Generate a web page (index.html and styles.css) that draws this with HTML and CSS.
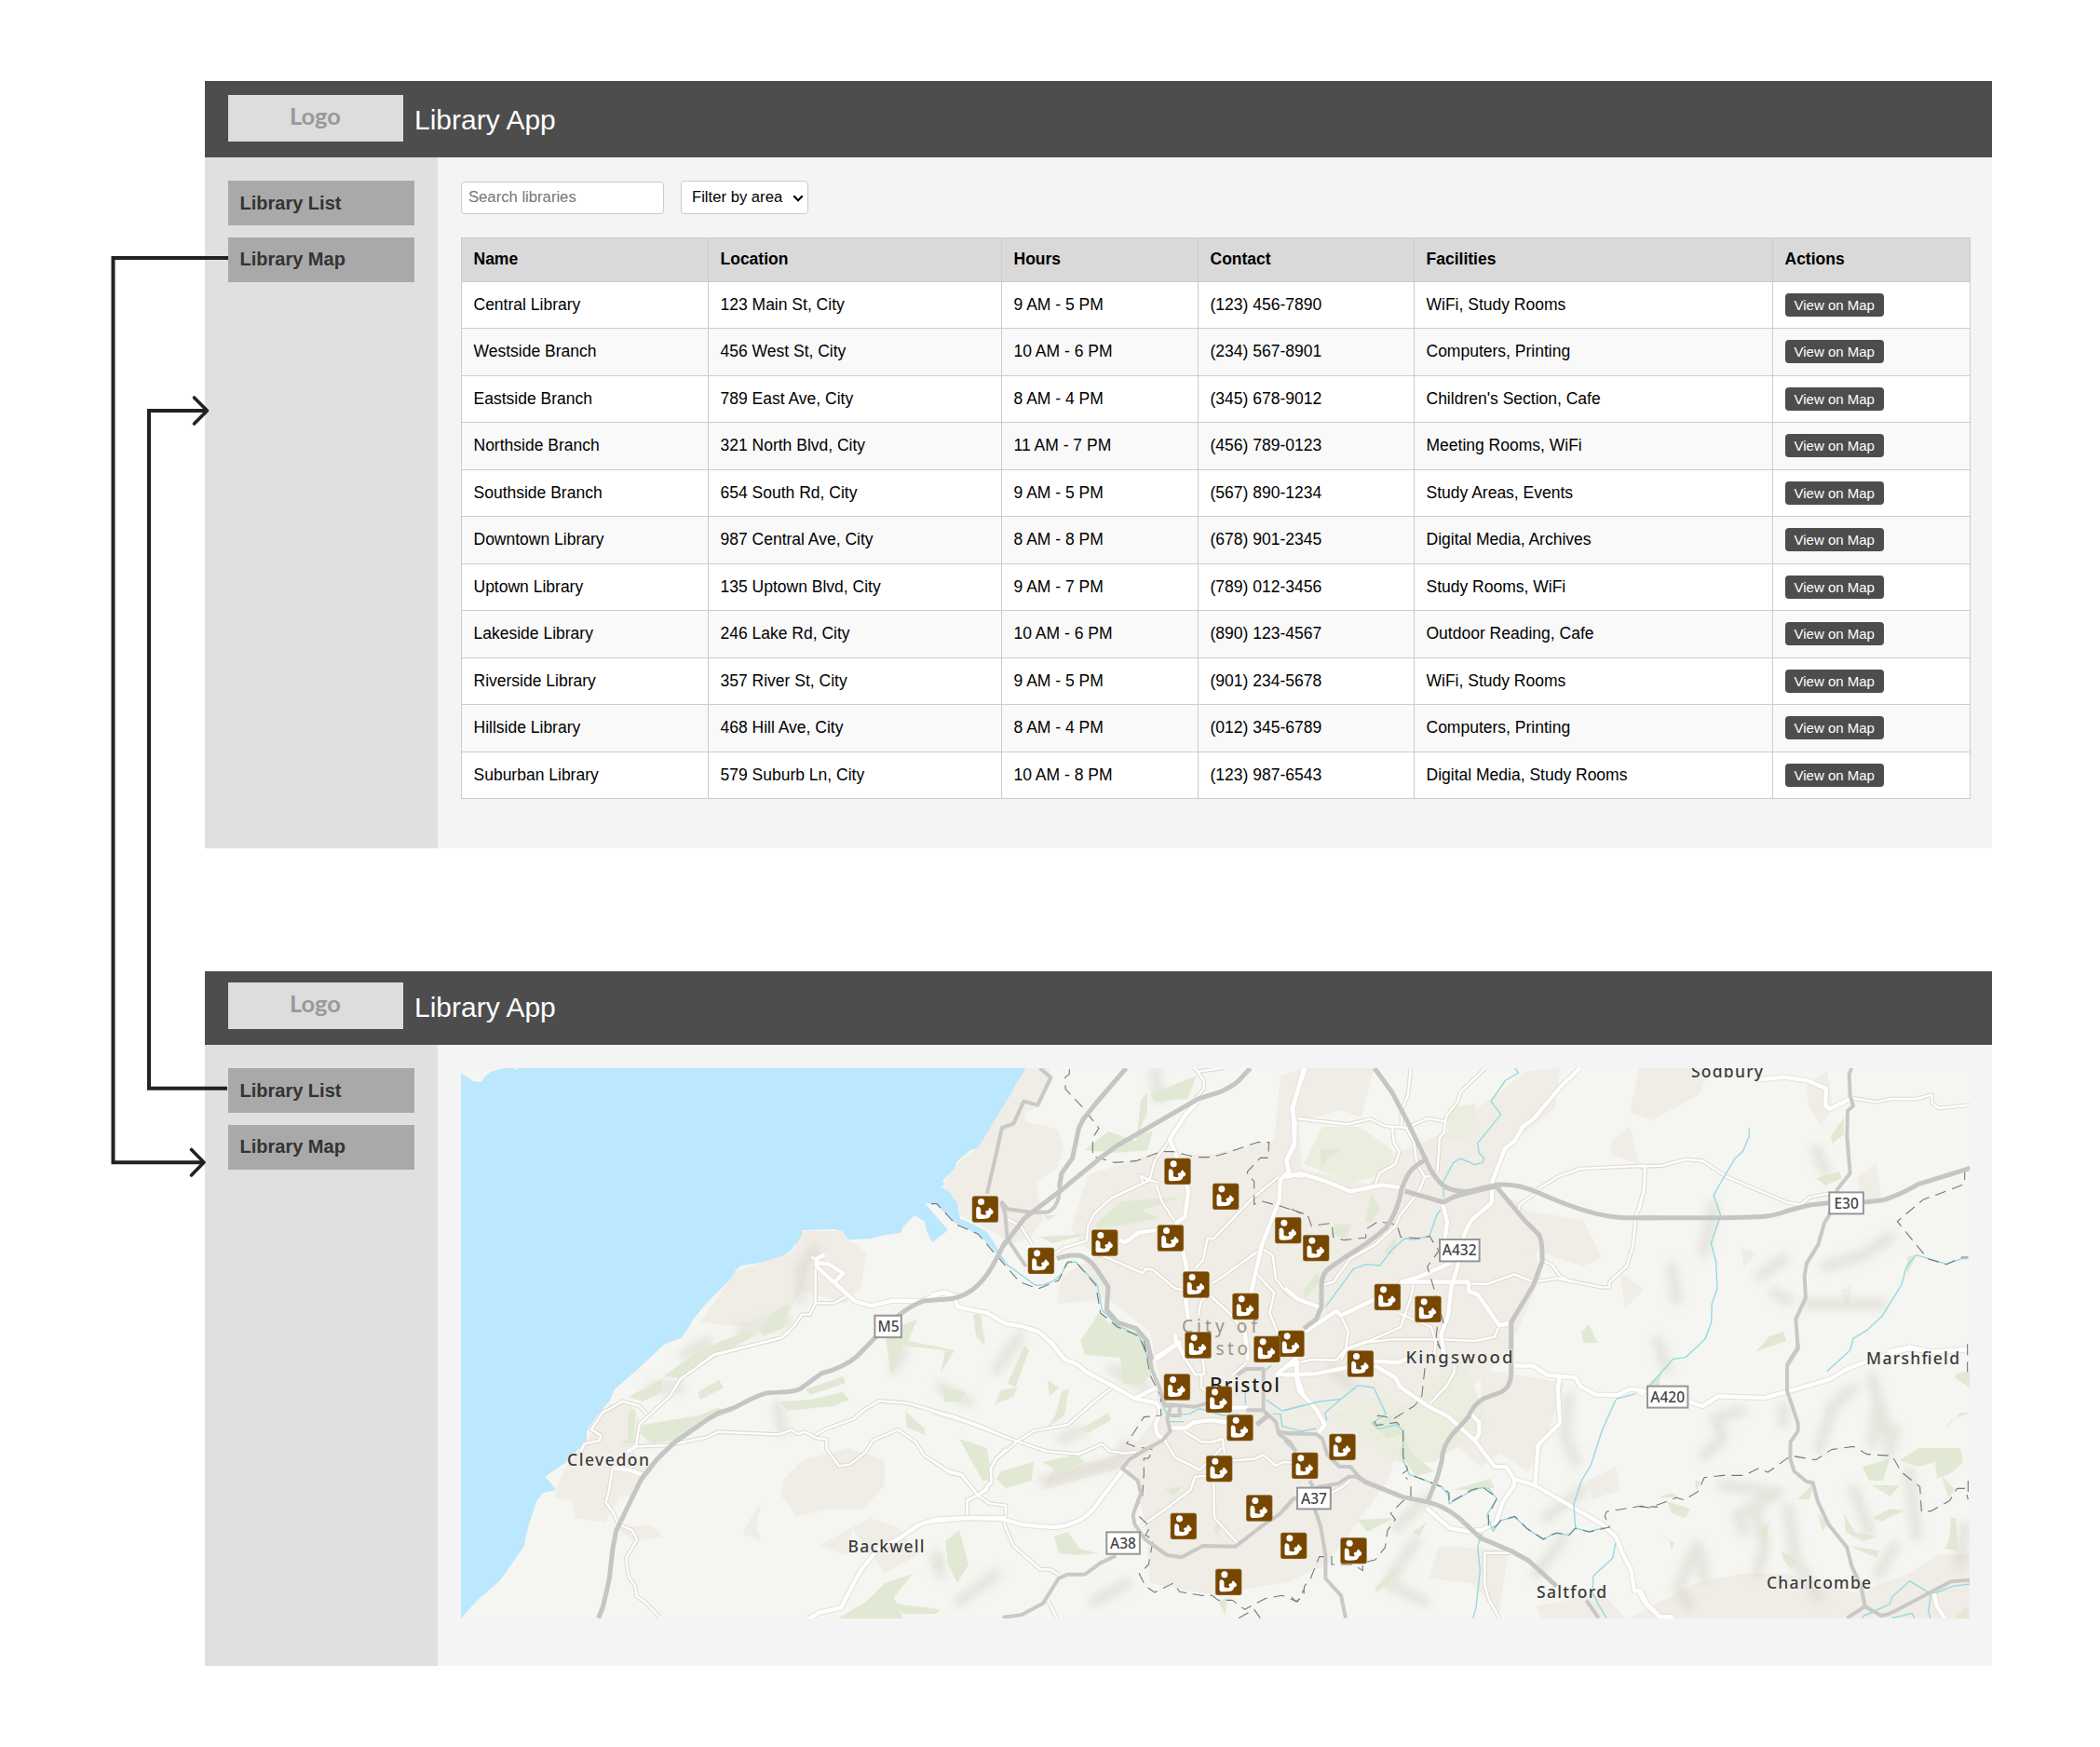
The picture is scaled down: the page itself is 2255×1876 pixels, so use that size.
FILE: index.html
```html
<!DOCTYPE html>
<html lang="en">
<head>
<meta charset="utf-8">
<title>Library App</title>
<link rel="stylesheet" href="styles.css">
</head>
<body>
<div class="board">
  <section class="app app-list">
    <header class="topbar">
      <div class="logo">Logo</div>
      <h1 class="title">Library App</h1>
    </header>
    <div class="body">
      <nav class="sidebar">
        <a class="nav-item">Library List</a>
        <a class="nav-item">Library Map</a>
      </nav>
      <main class="content">
        <div class="filters">
          <input class="search" type="text" placeholder="Search libraries">
          <div class="select">Filter by area
            <svg class="chevron" viewBox="0 0 12 8"><path d="M1.3 1.3 6 6.2 10.7 1.3"/></svg>
          </div>
        </div>
        <table class="libraries">
          <colgroup><col class="c-name"><col class="c-loc"><col class="c-hours"><col class="c-contact"><col class="c-fac"><col class="c-act"></colgroup>
          <thead><tr><th>Name</th><th>Location</th><th>Hours</th><th>Contact</th><th>Facilities</th><th>Actions</th></tr></thead>
          <tbody>
            <tr><td>Central Library</td><td>123 Main St, City</td><td>9 AM - 5 PM</td><td>(123) 456-7890</td><td>WiFi, Study Rooms</td><td><button class="view">View on Map</button></td></tr>
            <tr><td>Westside Branch</td><td>456 West St, City</td><td>10 AM - 6 PM</td><td>(234) 567-8901</td><td>Computers, Printing</td><td><button class="view">View on Map</button></td></tr>
            <tr><td>Eastside Branch</td><td>789 East Ave, City</td><td>8 AM - 4 PM</td><td>(345) 678-9012</td><td>Children's Section, Cafe</td><td><button class="view">View on Map</button></td></tr>
            <tr><td>Northside Branch</td><td>321 North Blvd, City</td><td>11 AM - 7 PM</td><td>(456) 789-0123</td><td>Meeting Rooms, WiFi</td><td><button class="view">View on Map</button></td></tr>
            <tr><td>Southside Branch</td><td>654 South Rd, City</td><td>9 AM - 5 PM</td><td>(567) 890-1234</td><td>Study Areas, Events</td><td><button class="view">View on Map</button></td></tr>
            <tr><td>Downtown Library</td><td>987 Central Ave, City</td><td>8 AM - 8 PM</td><td>(678) 901-2345</td><td>Digital Media, Archives</td><td><button class="view">View on Map</button></td></tr>
            <tr><td>Uptown Library</td><td>135 Uptown Blvd, City</td><td>9 AM - 7 PM</td><td>(789) 012-3456</td><td>Study Rooms, WiFi</td><td><button class="view">View on Map</button></td></tr>
            <tr><td>Lakeside Library</td><td>246 Lake Rd, City</td><td>10 AM - 6 PM</td><td>(890) 123-4567</td><td>Outdoor Reading, Cafe</td><td><button class="view">View on Map</button></td></tr>
            <tr><td>Riverside Library</td><td>357 River St, City</td><td>9 AM - 5 PM</td><td>(901) 234-5678</td><td>WiFi, Study Rooms</td><td><button class="view">View on Map</button></td></tr>
            <tr><td>Hillside Library</td><td>468 Hill Ave, City</td><td>8 AM - 4 PM</td><td>(012) 345-6789</td><td>Computers, Printing</td><td><button class="view">View on Map</button></td></tr>
            <tr><td>Suburban Library</td><td>579 Suburb Ln, City</td><td>10 AM - 8 PM</td><td>(123) 987-6543</td><td>Digital Media, Study Rooms</td><td><button class="view">View on Map</button></td></tr>
          </tbody>
        </table>
      </main>
    </div>
  </section>

  <section class="app app-map">
    <header class="topbar">
      <div class="logo">Logo</div>
      <h1 class="title">Library App</h1>
    </header>
    <div class="body">
      <nav class="sidebar">
        <a class="nav-item">Library List</a>
        <a class="nav-item">Library Map</a>
      </nav>
      <main class="content">
        <svg class="map" viewBox="495 1147 1620 591">
          <defs>
            <filter id="soft" x="-30%" y="-30%" width="160%" height="160%"><feGaussianBlur stdDeviation="5"/></filter>
            <symbol id="pin" viewBox="0 0 86 86">
              <rect x="1" y="1" width="84" height="84" rx="8" fill="#774700" stroke="#a98a5c" stroke-width="2"/>
              <circle cx="30" cy="19" r="10.5" fill="#fff"/>
              <path class="reader" d="M14 41Q15 34 21 35Q28 36 29 44L29 59L40 62Q46 62 47 57Q41 54 45 49Q49 46 53 48Q53 42 57 39Q61 37 63 44Q70 47 69 54Q67 60 61 60Q60 68 52 72Q40 75 20 74Q14 74 14 68Z" fill="#fff"/>
            </symbol>

            <!-- secondary roads, drawn twice: casing then fill -->
            <g id="minor">
              <g transform="translate(480 1130) scale(.38265 .33333)">
                <path d="M1034 690V808L1018 845H995L975 880L938 920L750 973L695 1020M1034 808H1085L1120 788"/>
                <path d="M1060 652L1025 662L1040 680"/>
              </g>
              <g transform="translate(480 1430) scale(.38265 .33333)">
                <path d="M960 0L938 20L750 75L655 152L625 208L540 298L530 370L505 388"/>
                <path d="M375 388L385 362L428 350L432 335L405 315L438 258L455 250L492 224L540 240L560 265"/>
                <path d="M530 370L620 366L730 340L760 323L930 331L968 317L985 330L1005 323L1035 342L1065 347L1065 378L1100 433L1132 427L1175 388L1195 350L1265 316L1315 355L1340 400L1405 447L1445 460L1490 527"/>
                <path d="M1035 332L1070 310L1140 282L1170 252L1213 223L1290 230L1330 243L1420 272L1500 305L1568 340"/>
                <path d="M465 440L453 520L445 550L465 580L480 620L520 640L533 670L502 730L510 790L528 820L532 853L555 870L600 923"/>
                <path d="M1568 378L1540 410L1527 437V488L1490 527L1460 545V597"/>
              </g>
              <g transform="translate(1000 1130) scale(.33333)">
                <path d="M770 280L720 350L703 412L580 470L525 520L505 560L500 608L425 630L395 650M730 418L703 412L675 398L683 425"/>
                <path d="M725 430L745 485L785 545"/>
                <path d="M855 60L878 90V118L850 150M845 50L860 62L945 50"/>
                <path d="M1120 400L1035 470L910 600H890L875 670L850 697"/>
                <path d="M540 650L683 712L690 697L713 700L785 760L820 768M905 745L945 718L1065 632L1100 655L1110 730L1150 780L1200 806"/>
                <path d="M900 785L960 840L1010 900M860 850L868 805L890 780"/>
                <path d="M1050 715L1105 775L1090 840L1120 915"/>
                <path d="M245 537L290 562L325 620"/>
              </g>
              <g transform="translate(1380 1130) scale(.33333)">
                <path d="M35 213L200 232L275 215L320 237L390 243L460 213L518 223M405 51L395 140L375 185V237M345 240L350 290L368 320L355 360L305 388L290 425"/>
                <path d="M645 51L565 128L555 160L520 205L512 258L498 275L490 385M390 243L415 290L425 360L450 402L430 450L370 525L355 560L290 620L210 665L155 740L120 750"/>
                <path d="M750 515L757 488L800 460L815 440L880 400L950 375L1160 365M1160 365L1157 440L1130 530L1120 625L1100 690L1045 740V757L1020 757L870 727"/>
                <path d="M830 670L860 685L885 720L920 740M375 740L650 747L738 715L800 740L880 728"/>
                <path d="M415 740L405 790L372 885L260 935L195 960L180 990M260 935L340 925H505L610 930L675 917L688 883"/>
                <path d="M365 840L470 885L485 930L480 990M180 850L203 900L195 960"/>
                <path d="M465 400H445"/>
              </g>
              <g transform="translate(1760 1130) scale(.33333)">
                <path d="M0 368L75 365L150 345L205 350L280 400L475 483L520 492L550 467L610 455"/>
                <path d="M18 365L15 450L0 510M690 148L765 160L810 150H895L943 137L945 165L965 180L1068 170"/>
              </g>
              <g transform="translate(1000 1440) scale(.33333)">
                <path d="M0 225L110 260L275 322L370 355L475 365L550 332L575 355L625 362L660 357"/>
                <path d="M585 148L525 195L440 270L330 290L275 325L210 380L190 412L195 455L180 465V480L150 497L115 512V567"/>
                <path d="M0 383L60 425L97 433L150 497L185 523L240 530V575L235 590L265 660L350 735L385 737L415 755M375 835L405 893"/>
                <path d="M910 455L912 570L990 655M885 435L850 437L835 480L770 530L675 598"/>
                <path d="M970 385L1040 380L1070 367L1110 402L1135 390L1165 392M755 325L785 375L865 415L935 345M815 290L870 325H905L938 315L945 360"/>
                <path d="M820 60L850 108H880L875 55M870 108V150L890 165M970 110L1015 70"/>
              </g>
              <g transform="translate(1380 1440) scale(.33333)">
                <path d="M45 70L85 60L165 62L195 25L265 0M545 80V100L520 145L460 208M725 683H643V785L655 830L690 893"/>
                <path d="M210 450L185 470L150 490"/>
              </g>
            </g>

            <!-- primary roads -->
            <g id="major">
              <g transform="translate(480 1130) scale(.38265 .33333)">
                <path d="M1060 652L1037 665V690L1085 740L1145 802L1190 817L1250 800L1330 802L1395 772L1435 790"/>
                <path d="M1037 678L1070 682L1112 712L1085 743"/>
              </g>
              <g transform="translate(480 1430) scale(.38265 .33333)">
                <path d="M1015 925L1045 905L1105 890L1160 770L1210 700L1270 665L1325 622L1370 605L1460 600H1568M505 388L530 370M465 440L510 445L545 460"/>
              </g>
              <g transform="translate(1000 1130) scale(.33333)">
                <path d="M0 782L40 775L75 790L85 820L180 840L240 875L290 882L345 900L380 930L430 990"/>
                <path d="M1200 51L1165 180L1170 290L1145 345L1152 385L1125 410L1120 480L1065 620L1030 775M860 158L820 200L768 280L815 395L828 450L817 530L790 548L812 650L822 690L820 800L828 860"/>
                <path d="M605 605L625 612L670 580L725 573M1130 400L1160 395L1200 398M785 910L790 940L720 985M1010 900L1020 990"/>
              </g>
              <g transform="translate(1380 1130) scale(.33333)">
                <path d="M65 51L22 180L32 230L30 300L5 350L12 390L0 405M0 403L50 390L130 415L210 448L310 428L370 435"/>
                <path d="M950 51L890 108L800 215L765 240L740 285L708 310L668 415L665 485L600 540L578 585L555 690L535 760L525 850L502 910L515 990"/>
                <path d="M508 490L522 545L515 600M530 680L440 720L375 740H590L592 770L620 780L690 880L725 872M290 795L180 848L165 833L125 860L65 900"/>
                <path d="M0 760L40 795L120 825"/>
              </g>
              <g transform="translate(1760 1130) scale(.33333)">
                <path d="M380 88L470 80L545 92L603 117L600 170L613 183L680 150M800 965L870 950L950 965L1060 955"/>
              </g>
              <g transform="translate(1000 1440) scale(.33333)">
                <path d="M385 0L430 60L470 75L500 100L585 145L655 185L725 200L740 225L722 270L728 300L755 325M655 185L722 152"/>
                <path d="M0 580L120 570L225 573L300 593L390 600Q440 600 490 570Q520 550 545 510L615 420"/>
                <path d="M770 280H820L845 262L900 255L955 262M785 0L800 5L722 60M790 0L820 60M945 215H1020M1110 110L1170 60L1200 25M1110 108H1200M1175 60L1180 120L1200 180"/>
              </g>
              <g transform="translate(1380 1440) scale(.33333)">
                <path d="M0 110L100 105L200 85L290 65L365 70L395 55M290 80L355 118L370 148L460 210L525 243L610 320L675 405H712L738 445L805 465L1020 590L1065 630L1085 680L1115 740L1125 805H1145L1165 845L1200 880"/>
                <path d="M0 85L40 70L35 110L45 160L100 220L128 270L108 295M738 80H800L845 110L935 118L950 145L1000 173L1070 175L1110 155L1165 160"/>
                <path d="M885 118L878 150L885 265L815 335L805 465M600 237L625 262V300L610 320M738 445V465L700 520L680 585L635 608L590 613L530 603L455 538"/>
              </g>
              <g transform="translate(1760 1440) scale(.33333)">
                <path d="M0 165L15 170M160 195L205 210L255 178L405 183L480 163L615 123L670 90L750 60L830 35L870 25L950 35L1062 28M0 810L20 845L65 888H110M950 810L960 855L985 893"/>
              </g>
            </g>
          </defs>

          <rect x="495" y="1147" width="1620" height="591" fill="#bbe7ff"/>
          <path class="land" d="M1102 1147L1095 1158 1089 1167 1087 1177 1073 1197 1062 1216 1050 1233 1042 1235 1027 1248 1025 1255 1012 1268 1016 1273 1010 1274 1020 1280 1028 1292 1031 1309 1046 1315 1060 1323 1072 1342 1080 1355 1076 1355 1068 1343 1053 1328 1043 1322 1025 1313 1015 1303 1005 1293 993 1292 1018 1321 1001 1334 995 1322 993 1312 982 1305 970 1317 967 1324 951 1326 935 1330 916 1331 907 1331 905 1322 895 1320 861 1321 863 1330 853 1337 849 1343 832 1354 815 1356 796 1359 789 1365 790 1368 775 1383 758 1400 744 1417 740 1425 731 1437 714 1443 685 1470 660 1492 654 1505 641 1520 630 1537 630 1547 622 1555 608 1570 585 1586 591 1592 597 1600 583 1603 576 1612 565 1647 563 1660 537 1697 511 1720 495 1738H2115V1147Z"/>
          <path class="land" d="M495 1147H540L527 1151 520 1157 517 1162 508 1161 495 1152Z"/>
          <path class="land" d="M552 1147h4l-2 2zM841 1191h2v1h-2z"/>

          <g class="urban">
            <path d="M1102 1147H1128L1125 1165 1113 1190 1100 1195 1102 1205 1135 1212 1142 1232 1135 1255 1112 1270 1120 1310 1105 1330 1085 1335 1070 1325 1031 1305 1028 1292 1013 1272 1028 1250 1050 1233Z"/>
            <path d="M1168 1262L1240 1238 1300 1240 1368 1225 1375 1155 1400 1147H1475L1462 1200 1440 1192 1395 1205 1398 1255 1470 1272 1495 1240 1555 1215 1600 1180 1640 1150 1675 1147 1670 1190 1615 1235 1605 1275 1640 1300 1655 1370 1620 1450 1570 1500 1510 1530 1490 1590 1465 1625 1425 1680 1380 1700 1300 1712 1235 1700 1230 1640 1220 1590 1210 1575 1120 1600 1130 1580 1210 1560 1240 1525 1245 1480 1235 1430 1190 1395 1135 1400 1140 1370 1175 1350 1150 1320Z"/>
            <path d="M863 1322L905 1322 910 1330 930 1345 925 1380 908 1400 860 1385 848 1410 800 1425 752 1420 790 1365 850 1345Z"/>
            <path d="M654 1508L675 1505 690 1530 680 1560 700 1580 680 1605 665 1608 650 1635 618 1630 615 1612 595 1608 605 1580 632 1545Z"/>
            <path d="M862 1568L910 1555 950 1568 950 1595 925 1622 892 1620 855 1628 838 1605 842 1588Z"/>
            <path d="M915 1640L935 1630 965 1640 985 1670 950 1690ZM660 1640L700 1638 712 1650 680 1655ZM800 1640L818 1612 812 1640 818 1655 798 1648Z"/>
            <path d="M1640 1300L1700 1310 1720 1350 1700 1360 1640 1340ZM1590 1470L1680 1485 1655 1560 1640 1580 1610 1560 1590 1575 1560 1550 1590 1530Z"/>
            <path d="M1545 1660L1620 1665 1610 1730 1580 1700 1535 1695ZM1650 1725L1720 1710 1745 1738H1655Z"/>
            <path d="M1940 1165L1962 1150 1968 1190 1955 1208 1943 1190ZM1994 1265L2015 1250 2020 1285 1998 1290ZM1870 1340L1886 1345 1872 1362ZM1976 1385L1988 1380 1984 1405Z"/>
            <path d="M1750 1738L1820 1700 1870 1690 1920 1690 1990 1710 2050 1690 2080 1670 2115 1668V1738ZM1760 1147H1835L1825 1175 1773 1203 1750 1195Z"/>
            <path d="M1730 1225L1750 1210 1760 1250 1730 1240ZM1740 1365L1765 1385 1745 1405ZM1705 1590L1735 1575 1740 1600 1710 1610ZM880 1660L915 1640 910 1670Z"/>
          </g>

          <g class="shade" filter="url(#soft)">
            <path d="M1870 1515l-28 8 8 20-20 20M1915 1510v18M1990 1490l-22 20-15 45M2015 1515l-4 35M2035 1535l-6 25M1850 1595l60 8-45 25 8 16M1885 1620l10 40-8 30M1920 1620l8 55 25 40M1990 1600l18 45M2050 1580l8 70M1822 1660l-20 45 12 20M1825 1665l5 30M2035 1660l-18 30M2110 1640l-6 40M2010 1480l20 70"/>
            <path d="M1950 1235l10 22M1890 1370l25-18M1960 1360l40-12 30-20M1940 1400l80 0M1905 1388l15 8M1840 1295l-10 50M1780 1440l10 30M1795 1360l5 35"/>
            <path d="M1685 1500l-5 40 12 30M1520 1655l-30 45 40 20M1700 1600l-40 30M1430 1470l20 18M1500 1640l30-30M1680 1650l-30 40"/>
            <path d="M1140 1545l20-8M1120 1590l80-20 10-20M1010 1690l-5-20M1070 1470l25-35M1175 1720l35-20M1240 1150l5 30M1010 1490l30 15M960 1470l10-20M1030 1720l40-30"/>
            <path d="M860 1395l0-30 15-25M795 1430l50-12M735 1455l25-15M700 1490l30 0M835 1510l5 25M1195 1470l35 20M700 1545l30-8"/>
          </g>

          <g class="woods">
            <path d="M815 1425L835 1405 848 1400 842 1425 820 1435ZM730 1465L755 1448 800 1430 812 1433 760 1462 730 1480 712 1478ZM749 1495L772 1482 777 1490 752 1503ZM690 1530L750 1520 770 1512 790 1515 760 1525 735 1545 700 1550 688 1540ZM675 1500L712 1480 710 1495 690 1505ZM838 1505L870 1503 905 1495 912 1503 895 1510 845 1515ZM865 1492L905 1478 908 1485 870 1498ZM675 1515l8-2-2 25 0 12-15 0 8-5z"/>
            <path d="M950 1430L985 1417 975 1440 1025 1450 1010 1475 1015 1450 970 1445 957 1477ZM1045 1412l8-2 5 35-10-10zM1012 1490l25 5-5 10h-18zM1030 1545L1060 1555 1065 1590 1055 1590ZM1075 1580L1110 1570 1108 1590 1080 1598 1070 1588ZM1120 1570L1155 1562 1165 1570 1135 1580ZM972 1515l20 18 2 8-20-8z"/>
            <path d="M1180 1410L1190 1420 1220 1430 1232 1450 1237 1475 1225 1488 1205 1485 1203 1458 1165 1455 1160 1440ZM1100 1445l5 5-15 40-8-5zM1075 1492l18-2-5 10-20 8zM1125 1482l12 8-10 10zM1140 1495l8-5-5 30-20 15 10-15zM1160 1535l30-18 3 8-25 14z"/>
            <path d="M1165 1235L1190 1215 1220 1225 1225 1182 1232 1172 1232 1195 1222 1218 1238 1215 1232 1235 1200 1238ZM1235 1175L1285 1155 1275 1180 1240 1183ZM1175 1315L1205 1290 1270 1285 1225 1300 1245 1308 1180 1320ZM1115 1328L1170 1325 1130 1335ZM1120 1305h15l-10 5z"/>
            <path class="park" d="M1400 1250L1420 1210 1460 1210 1495 1235 1490 1260 1450 1270ZM1555 1190L1585 1185 1580 1220 1555 1225ZM1430 1520L1480 1500 1510 1510 1570 1460 1600 1530 1540 1570 1500 1570Z"/>
            <path d="M1418 1234h24l-15 8-9 16zM1472 1282l10 15-8 15h-8zM1433 1315h18l-5 15-15-5zM1400 1385l15-18 4 8-18 20zM1485 1345l15-18-3 20zM1475 1530l20-10 10 20-15 5zM1508 1540L1515 1560 1540 1580 1520 1585 1503 1560ZM1560 1600l40-12 5 10-30 2zM1458 1632l40-2-30 15zM1517 1645l15-10-8 15zM1477 1705l25-25-10 20-15 10z"/>
            <path d="M1015 1655L1030 1643 1040 1680 1028 1700 1018 1680ZM1132 1650l15-5 12 18 20 5-22 2-20-2zM930 1720L950 1700 980 1690 960 1715 970 1738H900ZM960 1722l50 6-5 5h-35zM1000 1685l12-12-2 10zM1250 1600l22-5-12 12zM1303 1640l10-10-5 20zM1308 1720l10-5-2 20zM1060 1590l0 5"/>
            <path d="M1966 1220L1980 1200 1980 1218 1968 1228ZM1950 1265L1975 1258 1978 1265 1960 1273ZM1885 1452L1900 1435 1915 1430 1918 1440 1895 1448ZM1698 1430l8-8 10 20h-16zM2048 1350l10-3-10 22zM1770 1487l15-15-5 20z"/>
            <path d="M2040 1568L2060 1555 2105 1555 2108 1570 2095 1582 2080 1588 2078 1570 2060 1575ZM2085 1585l15 15-8 8zM2000 1575l18-5 12-5-8 25h-15zM2010 1595l30 0-10 12zM1790 1612L1815 1620 1810 1630 1795 1625ZM1780 1608l15-5 8 5zM1820 1590l6 0-4 12zM1888 1645L1900 1635 1895 1660ZM1913 1665l18 12-8 8-8-10zM1930 1610l18-18-5 18zM1980 1625L1992 1645 2015 1650 2000 1655 1982 1645ZM1985 1660l33 5-2 8zM2010 1630l20-10 15 2-25 12zM2095 1630l5 0 3 35-15-2 5-10zM1795 1665l-2-10-15-10 20 12zM2088 1535L2105 1517H2115L2095 1525ZM2100 1475L2115 1472V1490L2100 1480ZM2098 1738L2112 1725 2115 1738ZM1952 1625l10 10-5 10z"/>
          </g>

          <use href="#minor" class="minor-case"/>
          <use href="#minor" class="minor-fill"/>
          <use href="#major" class="major-case"/>
          <use href="#major" class="major-fill"/>

          <g class="river">
            <path transform="translate(1000 1130) scale(.33333)" d="M215 650L245 685L335 750Q380 755 420 715L435 680L465 675L535 750L550 830L600 880L670 915L700 990"/>
            <path transform="translate(1380 1130) scale(.33333)" d="M740 51L752 66L710 90L663 158L695 200L620 293L625 325L640 340L637 355L610 362L565 342L542 355L508 420L512 470M500 507L488 525L465 592L415 603L385 600L345 635L305 687L260 683L220 698L130 820"/>
            <path transform="translate(1760 1130) scale(.33333)" d="M355 245V270L335 318L307 345L240 460L263 525L232 615L248 675L252 760L235 810L233 870L213 923L150 983L110 988L22 1088M1062 665H1040L990 682L893 653L862 690L845 750L783 850L735 895L690 922L680 960L605 1028"/>
            <path transform="translate(1000 1440) scale(.33333)" d="M740 190L760 240L830 235L865 218L940 240L990 235M765 260H815M1012 165V205M1080 190L1130 225L1200 207M1100 235H1125L1130 275L1200 292M1095 80L1075 95"/>
            <path transform="translate(1380 1440) scale(.33333)" d="M0 223L110 195L180 187L235 143L285 150L325 235L280 265L300 283L360 270L380 290V385L400 430L505 470L528 500V525L600 483L635 472L655 475L683 508L650 560L670 613L695 578L740 567L780 605L832 640L865 620L915 625L935 603L980 615L1030 600M135 255L128 232L180 187M0 295L45 292L100 282M635 620L620 660L628 740L615 860L605 893M1065 190L1020 290L985 400L955 450L930 525L935 603M1065 650L1055 700L993 757L990 810L1010 850L1035 893M1065 187L1130 170"/>
            <path transform="translate(1760 1440) scale(.33333)" d="M1065 783L1010 790L960 810L935 812L872 773L815 825L808 848L725 885L720 893M940 815L932 870L938 893M815 893L880 877L887 893"/>
          </g>

          <g class="boundary">
            <path transform="translate(1000 1130) scale(.33333)" d="M0 488H18L80 555L150 585L215 660L285 740L345 762L410 735L440 675L465 675L530 750L545 840L600 885L670 915L700 985M445 55V70L432 80V118L490 180L540 245L520 275V335L590 355L660 350L740 320H780L850 338H900L950 325L1050 290H1088L1085 340H1060L1018 385L1022 400L1040 415V490L1065 480L1130 497L1200 520"/>
            <path transform="translate(1380 1130) scale(.33333)" d="M20 505L75 530L85 560L150 550L155 595L190 605L260 597V570L300 545L360 555L372 595L440 600L465 592L495 640L458 690L485 780L510 870L490 885L485 930L500 955"/>
            <path transform="translate(1760 1130) scale(.33333)" d="M1050 375L1048 425L915 475L832 545L930 665L990 683L1040 660H1060M1058 940V1030"/>
            <path transform="translate(1000 1440) scale(.33333)" d="M685 0L705 110L740 180V240L685 245L630 330L655 340L715 350L700 378H685V430L680 500L655 550L705 600L690 625L715 640L700 720L670 750L690 790L720 810L780 780L800 808L870 820H905L925 835H970L1010 865L1075 830L1130 820L1180 840L1200 800M990 893L1040 865L1060 893"/>
            <path transform="translate(1380 1440) scale(.33333)" d="M490 0L500 25M450 88L440 180L415 210L350 250L300 240L285 255L295 272L360 262L380 285V370L395 415L375 430L395 445M415 435L505 470L528 490V522L600 480L635 470L683 505L655 560V600H675L695 578L740 565L780 605L832 638L875 618L915 625L935 603L980 615L1045 600L1030 565L1035 550L1145 532L1200 535M405 468V500L380 515L340 555L355 575L330 610L322 665L290 705L250 715L250 740L220 720H150L150 695H110L80 770L62 790L60 820L35 840L20 825"/>
            <path transform="translate(1760 1440) scale(.33333)" d="M0 533L35 537L120 505L145 512L190 485L210 440L270 433H340L385 410L415 423L475 380L490 370L570 383L620 350L690 340L735 365L815 370L845 422L905 470L910 550L940 548L1000 515L1025 475H1050L1060 510M1060 450V510"/>
          </g>

          <g class="aroad">
            <path transform="translate(1000 1130) scale(.33333)" d="M350 51L385 82L343 170L298 158L265 230L228 243L180 455M225 480L245 505L320 515H375Q400 505 410 470L418 390M225 480L238 520L245 600L305 690"/>
            <path transform="translate(1760 1130) scale(.33333)" d="M685 51L677 70L680 140L690 173L672 188L670 270L680 390L640 440L612 525L597 550L577 620L540 680L533 720L537 790L505 860L512 950L475 1010"/>
            <path transform="translate(1000 1440) scale(.33333)" d="M695 0L712 95L735 150L750 200L770 215L760 250L770 290L745 320L690 350L640 380L615 410L665 450L675 490L650 560L655 590L690 640L760 690L805 697L875 660L980 662L1080 585L1120 560L1170 505M595 692L545 715L495 752H440L410 765L360 845L290 883L230 890M750 208H800V240H770M765 205L850 212L890 200M1015 223H1070V90H1015L985 110M1065 220L1110 260L1120 300L1155 325L1175 355M1112 290L1150 298L1200 297"/>
            <path transform="translate(1380 1440) scale(.33333)" d="M0 298L100 300L120 315L135 365L175 405H210L240 440M0 320L35 355M80 450L90 470M0 540L25 510L110 470L170 460L205 437H235M95 540L115 600L130 690V765L180 820L195 893M970 835L1010 893"/>
            <path transform="translate(1760 1440) scale(.33333)" d="M510 0L512 25L477 80V160L512 265V290L488 325L487 380L500 420L540 453L560 457L575 515L610 590L670 665L685 725L715 790L728 855L780 885L805 880L1005 775L1068 770M728 855L670 893"/>
          </g>
          <g class="motorway">
            <path transform="translate(480 1130) scale(.38265 .33333)" d="M1568 608L1530 690Q1480 790 1400 796L1340 800Q1300 815 1260 855L1205 915L1150 980Q1115 1015 1050 1035L990 1085Q975 1095 900 1097Q870 1105 810 1143L760 1163Q740 1175 700 1208L640 1255L590 1310L545 1375L475 1540L465 1600L455 1700L438 1785L425 1823"/>
            <path transform="translate(1000 1130) scale(.33333)" d="M235 620L300 535L430 435L545 340L600 300L860 150L930 128Q970 110 990 92L1028 51M628 51L590 95L530 165L490 215L475 245L455 340L420 390L412 435"/>
            <path transform="translate(1000 1130) scale(.33333)" d="M405 665Q440 650 480 655Q510 665 530 695L570 755L565 830L600 870L660 890L695 930L710 990"/>
            <path transform="translate(1380 1130) scale(.33333)" d="M288 51L345 130L395 225L455 350Q475 400 510 430Q540 450 590 448L680 427Q740 420 810 450Q900 490 960 508Q1040 533 1100 533H1200M455 345Q405 370 390 405L375 440Q365 510 325 565Q270 615 200 655L150 690Q115 710 117 760V820L100 860L60 890M385 447L510 483L545 465L620 445L680 432L770 540L815 585Q830 600 828 675L800 750L728 870V990"/>
            <path transform="translate(1760 1130) scale(.33333)" d="M0 533H280L380 530Q430 530 480 510L550 492L610 485M725 483L780 477Q830 465 900 425L1068 373"/>
            <path transform="translate(1380 1440) scale(.33333)" d="M728 0V110Q725 150 695 165L640 185Q605 205 590 245L535 305Q505 345 505 385L490 440L460 515M230 435L260 455L380 503L455 518Q510 530 560 570L630 635L725 675L785 708L875 790"/>
            <path transform="translate(1000 1440) scale(.33333)" d="M1048 270L1085 240"/>
          </g>

          <g class="shield">
            <rect x="939.4" y="1412.7" width="28.4" height="23.4"/><text x="954" y="1430">M5</text>
            <rect x="1546" y="1331" width="42.6" height="23.4"/><text x="1567.2" y="1348.3">A432</text>
            <rect x="1964.3" y="1280.4" width="36.6" height="23"/><text x="1982.6" y="1297.6">E30</text>
            <rect x="1188.3" y="1645.3" width="35.6" height="23.4"/><text x="1206" y="1662.6">A38</text>
            <rect x="1393" y="1597.6" width="35.8" height="22.8"/><text x="1411" y="1614.7">A37</text>
            <rect x="1769" y="1488.6" width="43.4" height="23"/><text x="1790.7" y="1505.7">A420</text>
          </g>

          <g class="region">
            <text x="1269" y="1431" textLength="81">City of</text>
            <text x="1273 1284 1295 1305.5 1318 1328.5 1350" y="1455">Bristol</text>
          </g>
          <g class="places">
            <text x="609" y="1573.5" textLength="88">Clevedon</text>
            <text x="910.5" y="1666.7" textLength="82">Backwell</text>
            <text x="1650" y="1716" textLength="75">Saltford</text>
            <text x="1897" y="1705.7" textLength="112">Charlcombe</text>
            <text x="2004" y="1465.3" textLength="100">Marshfield</text>
            <text x="1816" y="1156.7" textLength="77">Sodbury</text>
            <text class="town" x="1509.5" y="1463.5" textLength="115">Kingswood</text>
            <text class="city" x="1299" y="1494.6" textLength="75">Bristol</text>
          </g>

          <g class="pins">
            <use href="#pin" x="1250.1" y="1243.5" width="28.8" height="28.8"/>
            <use href="#pin" x="1301.8" y="1270.5" width="28.8" height="28.8"/>
            <use href="#pin" x="1043.5" y="1284.1" width="28.8" height="28.8"/>
            <use href="#pin" x="1103.5" y="1339.5" width="28.8" height="28.8"/>
            <use href="#pin" x="1171.8" y="1320.2" width="28.8" height="28.8"/>
            <use href="#pin" x="1242.5" y="1315.1" width="28.8" height="28.8"/>
            <use href="#pin" x="1368.8" y="1306.8" width="28.8" height="28.8"/>
            <use href="#pin" x="1398.8" y="1325.8" width="28.8" height="28.8"/>
            <use href="#pin" x="1270.1" y="1365.1" width="28.8" height="28.8"/>
            <use href="#pin" x="1323.1" y="1388.5" width="28.8" height="28.8"/>
            <use href="#pin" x="1475.5" y="1378.5" width="28.8" height="28.8"/>
            <use href="#pin" x="1519.1" y="1391.5" width="28.8" height="28.8"/>
            <use href="#pin" x="1272.1" y="1430.1" width="28.8" height="28.8"/>
            <use href="#pin" x="1372.1" y="1428.5" width="28.8" height="28.8"/>
            <use href="#pin" x="1346.1" y="1434.5" width="28.8" height="28.8"/>
            <use href="#pin" x="1446.5" y="1450.1" width="28.8" height="28.8"/>
            <use href="#pin" x="1249.5" y="1475.1" width="28.8" height="28.8"/>
            <use href="#pin" x="1294.5" y="1488.5" width="28.8" height="28.8"/>
            <use href="#pin" x="1317.1" y="1518.8" width="28.8" height="28.8"/>
            <use href="#pin" x="1427.1" y="1539.5" width="28.8" height="28.8"/>
            <use href="#pin" x="1386.8" y="1559.5" width="28.8" height="28.8"/>
            <use href="#pin" x="1294.8" y="1562.8" width="28.8" height="28.8"/>
            <use href="#pin" x="1337.8" y="1605.1" width="28.8" height="28.8"/>
            <use href="#pin" x="1256.5" y="1624.5" width="28.8" height="28.8"/>
            <use href="#pin" x="1374.8" y="1645.5" width="28.8" height="28.8"/>
            <use href="#pin" x="1439.1" y="1650.8" width="28.8" height="28.8"/>
            <use href="#pin" x="1304.8" y="1684.5" width="28.8" height="28.8"/>
          </g>
        </svg>
      </main>
    </div>
  </section>

  <svg class="flow" viewBox="0 0 2255 1876">
    <path d="M245 277H121.5V1248.3H219"/>
    <path class="head" d="M205.5 1234.5L219 1248.3L205.5 1262"/>
    <path d="M244 1168.7H160V441H223"/>
    <path class="head" d="M208.5 427L222.5 441L208.5 455"/>
  </svg>
</div>
</body>
</html>
```
FILE: styles.css
```css
* { box-sizing: border-box; }

body {
  margin: 0;
  background: #fff;
  font-family: "Liberation Sans", Arial, sans-serif;
  color: #000;
}

.board {
  position: relative;
  width: 2255px;
  height: 1876px;
  padding: 87px 116px 87px 220px;
  display: flex;
  flex-direction: column;
  gap: 132px;
}

.app { display: flex; flex-direction: column; }
.app-list { height: 824px; }
.app-map { height: 746px; }

.topbar {
  display: flex;
  gap: 12px;
  padding-left: 25px;
  background: #4d4d4d;
}
.app-list .topbar { height: 82px; padding-top: 15px; box-shadow: inset 0 2px 0 #444b4e; }
.app-map .topbar { height: 79px; padding-top: 12px; }

.logo {
  width: 188px;
  height: 50px;
  padding-right: 1px;
  background: #ddd;
  color: #999;
  font: 700 25.5px/45px Lato, sans-serif;
  text-align: center;
}

.title {
  margin: 0;
  padding-top: 2px;
  color: #fff;
  font-size: 30px;
  font-weight: 400;
  line-height: 50px;
}

.body { flex: 1; display: flex; min-height: 0; }

.sidebar {
  flex: none;
  width: 250px;
  padding: 25px;
  background: #e0e0e0;
  display: flex;
  flex-direction: column;
  gap: 13px;
}
.nav-item {
  height: 48px;
  padding-left: 12.5px;
  background: #a9a9a9;
  color: #333;
  font-size: 20px;
  font-weight: 700;
  line-height: 48px;
}
.nav-item + .nav-item { line-height: 46px; }

.content { flex: 1; min-width: 0; padding: 25px 24px 0 25px; background: #f4f4f4; }

.filters { display: flex; align-items: flex-end; gap: 18px; margin-bottom: 25px; }
.search {
  width: 218px;
  height: 35px;
  padding: 0 7px 2px;
  border: 1px solid #ccc;
  border-radius: 4px;
  background: #fff;
  font: 16.67px "Liberation Sans", Arial, sans-serif;
}
.search::placeholder { color: #757575; }
.select {
  display: flex;
  justify-content: space-between;
  align-items: center;
  width: 137px;
  height: 36px;
  padding: 0 4px 1px 11px;
  border: 1px solid #ccc;
  border-radius: 4px;
  background: #fff;
  font-size: 16.67px;
  white-space: nowrap;
}
.chevron { width: 12px; height: 8px; margin-top: 2px; fill: none; stroke: #000; stroke-width: 2.2; }

.libraries {
  width: 1620px;
  table-layout: fixed;
  border-collapse: collapse;
  font-size: 17.5px;
  background: #fff;
}
.c-name { width: 265px; }
.c-loc { width: 315px; }
.c-hours { width: 211px; }
.c-contact { width: 232px; }
.c-fac { width: 385px; }
.c-act { width: 212px; }
.libraries th, .libraries td {
  padding: 0 12.5px;
  border: 1px solid #ccc;
  text-align: left;
  vertical-align: top;
  line-height: 48px;
}
.libraries th { height: 47px; line-height: 44px; background: #d9d9d9; }
.libraries td { height: 50px; }
.libraries tr:nth-child(even) td { height: 51px; background: #f9f9f9; }

.view {
  height: 25px;
  padding: 0 10px;
  border: 0;
  border-radius: 4px;
  background: #4d4d4d;
  color: #fff;
  font: 15px/25px "Liberation Sans", Arial, sans-serif;
}

.map { display: block; width: 1620px; height: 591px; overflow: hidden; }
.map path { vector-effect: non-scaling-stroke; }
.land { fill: #f5f6f1; }
.urban { fill: #efede5; }
.woods { fill: #e1e9d4; }
.park { fill: #ebeddf; }
.shade { fill: none; stroke: #d5d1c9; stroke-width: 12; stroke-linecap: round; stroke-linejoin: round; opacity: .5; }
.minor-case, .minor-fill, .major-case, .major-fill,
.river, .boundary, .aroad, .motorway { fill: none; stroke-linejoin: round; }
.minor-case { stroke: #e0dad2; stroke-width: 4.6; }
.minor-fill { stroke: #fff; stroke-width: 2.4; }
.major-case { stroke: #e6e2da; stroke-width: 6.4; }
.major-fill { stroke: #fff; stroke-width: 4.2; }
.river { stroke: #95d9e3; stroke-width: 1.4; }
.boundary { stroke: #777; stroke-width: 1.1; stroke-dasharray: 12 7; }
.aroad { stroke: #c8c8c7; stroke-width: 4; }
.motorway { stroke: #c5c5c4; stroke-width: 5; }

.shield rect { fill: #fff; stroke: #979797; stroke-width: 2; }
.shield text { fill: #444; font: 500 15.5px "Noto Sans", sans-serif; text-anchor: middle; }
.places text {
  font: 500 17.5px "Noto Sans", sans-serif;
  fill: #3c3c3c;
  stroke: #f5f6f1;
  stroke-width: 2;
  stroke-opacity: .75;
  paint-order: stroke;
}
.places .town { font-size: 18.5px; }
.places .city { font-size: 21px; fill: #222; }
.region text { font: 19px "Noto Sans", sans-serif; fill: #9b958b; }

.flow {
  position: absolute;
  left: 0;
  top: 0;
  width: 2255px;
  height: 1876px;
  pointer-events: none;
  fill: none;
  stroke: #222;
  stroke-width: 4;
}
.flow .head { stroke-linecap: round; stroke-linejoin: round; stroke-width: 3.6; }
```
